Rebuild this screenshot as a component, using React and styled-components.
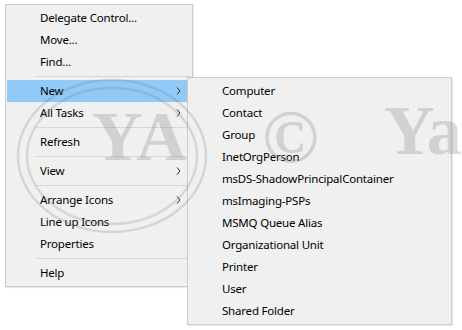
import styled, { createGlobalStyle } from 'styled-components';

const GlobalStyle = createGlobalStyle`
  html, body {
    margin: 0;
    padding: 0;
    background: #ffffff;
  }
  body {
    font-family: "Segoe UI", "Noto Sans", "Open Sans", sans-serif;
  }
`

const Canvas = styled.div`
  position: relative;
  width: 462px;
  height: 330px;
  overflow: hidden;
  padding: 4px 0 0 5px;
  box-sizing: border-box;
`

const Menu = styled.div`
  width: ${p => p.width}px;
  box-sizing: border-box;
  background: #f0f0f0;
  border: 1px solid #cccccc;
  box-shadow: 1px 1px 1px rgba(0, 0, 0, 0.08);
  padding: 2px 1px;
  display: flex;
  flex-direction: column;
`

const SubMenu = styled(Menu)`
  position: absolute;
  left: 187px;
  top: 77px;
  z-index: 2;
`

const Item = styled.div`
  height: 22px;
  display: flex;
  align-items: center;
  justify-content: space-between;
  padding: 0 10px 0 33px;
  font-size: 11.5px;
  letter-spacing: -0.2px;
  color: #000000;
  background: ${p => (p.active ? '#91c9f7' : 'transparent')};
  white-space: nowrap;
`

const Label = styled.span`
  line-height: 22px;
`

const Separator = styled.div`
  height: 7px;
  display: flex;
  align-items: center;
  padding-left: 29px;

  &::after {
    content: '';
    flex: 1;
    height: 1px;
    background: #d7d7d7;
  }
`

const Watermark = styled.div`
  position: absolute;
  inset: 0;
  pointer-events: none;
  z-index: 3;
`

const MarkText = styled.span`
  position: absolute;
  left: ${p => p.x}px;
  top: ${p => p.y}px;
  font-family: "Liberation Serif", serif;
  font-weight: bold;
  font-size: ${p => p.size}px;
  line-height: 1;
  color: rgba(120, 120, 120, 0.26);
`

const Rings = styled.svg`
  position: absolute;
  left: 0;
  top: 0;
`

const Chevron = () => (
  <svg width="5" height="8" viewBox="0 0 5 8">
    <path d="M1 0.5 L4 4 L1 7.5" fill="none" stroke="#2b2b2b" strokeWidth="1" />
  </svg>
)

const mainItems = [
  { label: 'Delegate Control...' },
  { label: 'Move...' },
  { label: 'Find...' },
  { sep: true },
  { label: 'New', sub: true, active: true },
  { label: 'All Tasks', sub: true },
  { sep: true },
  { label: 'Refresh' },
  { sep: true },
  { label: 'View', sub: true },
  { sep: true },
  { label: 'Arrange Icons', sub: true },
  { label: 'Line up Icons' },
  { label: 'Properties' },
  { sep: true },
  { label: 'Help' },
]

const newItems = [
  'Computer',
  'Contact',
  'Group',
  'InetOrgPerson',
  'msDS-ShadowPrincipalContainer',
  'msImaging-PSPs',
  'MSMQ Queue Alias',
  'Organizational Unit',
  'Printer',
  'User',
  'Shared Folder',
]

const App = () => {
  return (
    <Canvas>
      <GlobalStyle />
      <Menu width={188}>
        {mainItems.map((it, i) =>
          it.sep ? (
            <Separator key={i} />
          ) : (
            <Item key={i} active={it.active}>
              <Label>{it.label}</Label>
              {it.sub && <Chevron />}
            </Item>
          )
        )}
      </Menu>
      <SubMenu width={265}>
        {newItems.map(name => (
          <Item key={name}>
            <Label>{name}</Label>
          </Item>
        ))}
      </SubMenu>
      <Watermark>
        <Rings width="462" height="330">
          <ellipse cx="112" cy="156" rx="94" ry="76" fill="none" stroke="rgba(120,120,120,0.22)" strokeWidth="2.5" />
          <ellipse cx="112" cy="156" rx="85" ry="68" fill="none" stroke="rgba(120,120,120,0.22)" strokeWidth="2.5" />
        </Rings>
        <MarkText x={92} y={102} size={70}>YA</MarkText>
        <MarkText x={262} y={98} size={76}>©</MarkText>
        <MarkText x={384} y={96} size={70}>Ya</MarkText>
      </Watermark>
    </Canvas>
  )
}

export default App;
